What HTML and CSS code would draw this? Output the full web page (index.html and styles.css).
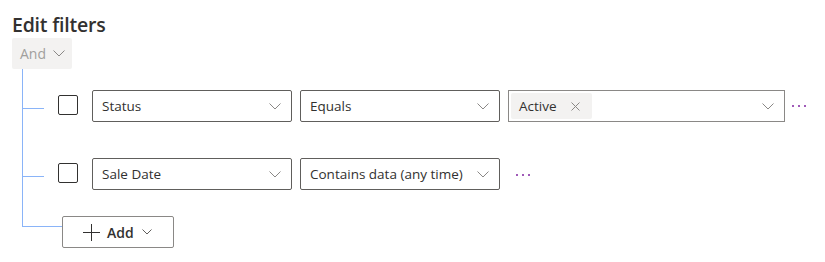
FILE: index.html
```html
<!DOCTYPE html>
<html lang="en">
<head>
    <meta charset="UTF-8">
    <title>Edit filters</title>
    <link rel="stylesheet" href="styles.css">
</head>
<body>
    <div class="panel">
        <h1>Edit filters</h1>
        <button class="and-button" type="button" disabled>
            And
            <svg class="chev" width="12" height="7" viewBox="0 0 12 7"><path d="M0.5 0.5 L6 6 L11.5 0.5" fill="none" stroke="currentColor"/></svg>
        </button>

        <div class="tree">
            <div class="row">
                <span class="connector"></span>
                <span class="checkbox"></span>
                <div class="select wide">
                    <span>Status</span>
                    <svg class="chev" width="12" height="7" viewBox="0 0 12 7"><path d="M0.5 0.5 L6 6 L11.5 0.5" fill="none" stroke="currentColor"/></svg>
                </div>
                <div class="select">
                    <span>Equals</span>
                    <svg class="chev" width="12" height="7" viewBox="0 0 12 7"><path d="M0.5 0.5 L6 6 L11.5 0.5" fill="none" stroke="currentColor"/></svg>
                </div>
                <div class="select values">
                    <span class="chip">Active
                        <svg class="close" width="9" height="9" viewBox="0 0 9 9"><path d="M0.5 0.5 L8.5 8.5 M8.5 0.5 L0.5 8.5" fill="none" stroke="currentColor"/></svg>
                    </span>
                    <svg class="chev" width="12" height="7" viewBox="0 0 12 7"><path d="M0.5 0.5 L6 6 L11.5 0.5" fill="none" stroke="currentColor"/></svg>
                </div>
                <span class="more near">
                    <svg width="16" height="4" viewBox="0 0 16 4"><rect x="0" y="1" width="2" height="2"/><rect x="6" y="1" width="2" height="2"/><rect x="12" y="1" width="2" height="2"/></svg>
                </span>
            </div>

            <div class="row">
                <span class="connector"></span>
                <span class="checkbox"></span>
                <div class="select wide">
                    <span>Sale Date</span>
                    <svg class="chev" width="12" height="7" viewBox="0 0 12 7"><path d="M0.5 0.5 L6 6 L11.5 0.5" fill="none" stroke="currentColor"/></svg>
                </div>
                <div class="select">
                    <span>Contains data (any time)</span>
                    <svg class="chev" width="12" height="7" viewBox="0 0 12 7"><path d="M0.5 0.5 L6 6 L11.5 0.5" fill="none" stroke="currentColor"/></svg>
                </div>
                <span class="more far">
                    <svg width="16" height="4" viewBox="0 0 16 4"><rect x="0" y="1" width="2" height="2"/><rect x="6" y="1" width="2" height="2"/><rect x="12" y="1" width="2" height="2"/></svg>
                </span>
            </div>
        </div>

        <div class="add-row">
            <span class="elbow"></span>
            <button class="add-button" type="button">
                <svg width="17" height="17" viewBox="0 0 17 17"><path d="M8.5 0 V17 M0 8.5 H17" fill="none" stroke="currentColor"/></svg>
                <span>Add</span>
                <svg class="chev small" width="10" height="6" viewBox="0 0 10 6"><path d="M0.5 0.5 L5 5 L9.5 0.5" fill="none" stroke="currentColor"/></svg>
            </button>
        </div>
    </div>
</body>
</html>
```

FILE: styles.css
```css
body {
    margin: 0;
    font-family: "Open Sans", "Noto Sans", sans-serif;
    font-size: 13.5px;
    color: #323130;
    background: #fff;
}

.panel {
    padding: 11px 12px;
}

h1 {
    margin: 0;
    font-size: 19.5px;
    font-weight: 600;
    line-height: 27px;
    letter-spacing: -0.2px;
    color: #323130;
}

.and-button {
    display: flex;
    align-items: center;
    gap: 7px;
    width: 60px;
    height: 31px;
    padding: 0 0 0 8px;
    border: none;
    border-radius: 2px;
    background-color: #f3f2f1;
    color: #a19f9d;
    font-family: inherit;
    font-size: 14px;
}

.tree {
    margin-left: 10px;
    border-left: 1px solid #8ab4f8;
    padding-top: 21px;
    padding-bottom: 26px;
    display: flex;
    flex-direction: column;
    gap: 36px;
}

.row {
    display: flex;
    align-items: flex-start;
    height: 32px;
}

.connector {
    width: 21px;
    height: 1px;
    margin-top: 18px;
    background-color: #8ab4f8;
}

.checkbox {
    width: 18px;
    height: 18px;
    margin: 5px 14px 0 14px;
    border: 1px solid #323130;
    border-radius: 2px;
}

.select {
    box-sizing: border-box;
    display: flex;
    align-items: center;
    justify-content: space-between;
    width: 200px;
    height: 32px;
    padding: 0 10px 0 9px;
    margin-right: 8px;
    border: 1px solid #605e5c;
    border-radius: 2px;
    color: #323130;
}

.select.values {
    width: 277px;
    padding-left: 2px;
    border-color: #8a8886;
    border-radius: 0;
    margin-right: 7px;
}

.chev {
    color: #8a8886;
}

.chip {
    display: flex;
    align-items: center;
    gap: 14px;
    height: 26px;
    padding: 0 12px 0 8px;
    border-radius: 2px;
    background-color: #f3f2f1;
}

.close {
    color: #8a8886;
}

.more {
    display: flex;
    align-items: center;
    height: 32px;
    fill: #a05ab8;
}

.more.far {
    margin-left: 8px;
    height: 34px;
}

.add-row {
    display: flex;
    align-items: flex-start;
    margin-left: 10px;
}

.elbow {
    width: 39px;
    height: 10px;
    border-left: 1px solid #8ab4f8;
    border-bottom: 1px solid #8ab4f8;
}

.add-button {
    display: flex;
    align-items: center;
    box-sizing: border-box;
    width: 112px;
    height: 32px;
    padding: 0 0 0 20px;
    border: 1px solid #8a8886;
    border-radius: 2px;
    background-color: #fff;
    color: #323130;
    font-family: inherit;
    font-size: 14px;
    font-weight: 600;
}

.add-button span {
    margin: 0 8px 0 7px;
}

.chev.small {
    color: #605e5c;
}
```
